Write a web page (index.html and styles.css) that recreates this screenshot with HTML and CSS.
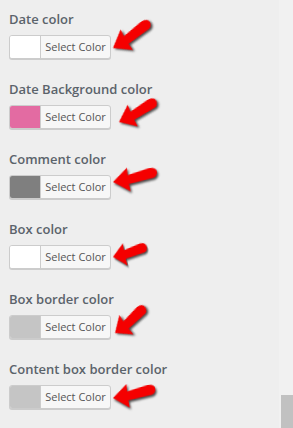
FILE: index.html
```html
<!DOCTYPE html>
<html lang="en">
<head>
  <meta charset="UTF-8" />
  <meta name="viewport" content="width=device-width, initial-scale=1.0" />
  <title>Color settings</title>
  <link rel="stylesheet" href="styles.css">
</head>
<body>
  <svg width="0" height="0" class="defs">
    <defs>
      <path id="arrow-shape" d="M1 13 L17 1 L16.5 8.5 L38 5 Q46 4.5 46 10 Q46 15.5 38 15.5 L16.5 17.5 L17 25 Z" />
    </defs>
  </svg>

  <div class="page">
    <div class="settings">

      <div class="field">
        <div class="label">Date color</div>
        <button class="picker"><span class="swatch swatch-white"></span><span class="picker-text">Select Color</span></button>
        <svg class="arrow arrow-1" viewBox="0 0 46 26"><use href="#arrow-shape" /></svg>
      </div>

      <div class="field">
        <div class="label">Date Background color</div>
        <button class="picker"><span class="swatch swatch-pink"></span><span class="picker-text">Select Color</span></button>
        <svg class="arrow arrow-2" viewBox="0 0 46 26"><use href="#arrow-shape" /></svg>
      </div>

      <div class="field">
        <div class="label">Comment color</div>
        <button class="picker"><span class="swatch swatch-gray"></span><span class="picker-text">Select Color</span></button>
        <svg class="arrow arrow-3" viewBox="0 0 46 26"><use href="#arrow-shape" /></svg>
      </div>

      <div class="field">
        <div class="label">Box color</div>
        <button class="picker"><span class="swatch swatch-white"></span><span class="picker-text">Select Color</span></button>
        <svg class="arrow arrow-4" viewBox="0 0 46 26"><use href="#arrow-shape" /></svg>
      </div>

      <div class="field">
        <div class="label">Box border color</div>
        <button class="picker"><span class="swatch swatch-light"></span><span class="picker-text">Select Color</span></button>
        <svg class="arrow arrow-5" viewBox="0 0 46 26"><use href="#arrow-shape" /></svg>
      </div>

      <div class="field">
        <div class="label">Content box border color</div>
        <button class="picker"><span class="swatch swatch-light"></span><span class="picker-text">Select Color</span></button>
        <svg class="arrow arrow-6" viewBox="0 0 46 26"><use href="#arrow-shape" /></svg>
      </div>

    </div>

    <div class="scrollbar">
      <div class="thumb"></div>
    </div>
  </div>
</body>
</html>
```

FILE: styles.css
```css
html, body {
  height: 100%;
}

body {
  margin: 0;
  background: #eeeeee;
  font-family: 'Open Sans', sans-serif;
  overflow: hidden;
}

.defs {
  position: absolute;
}

.page {
  display: flex;
  height: 428px;
}

.settings {
  flex: 1;
  padding-left: 9px;
}

.field {
  position: relative;
  height: 70px;
  padding-top: 9px;
  box-sizing: border-box;
}

.label {
  font-size: 13px;
  font-weight: 600;
  line-height: 20px;
  color: #5b636b;
  white-space: nowrap;
  margin-bottom: 6px;
}

.picker {
  display: flex;
  width: 102px;
  height: 24px;
  padding: 0;
  border: 1px solid #cccccc;
  border-radius: 3px;
  background: #f7f7f7;
  box-shadow: 0 1px 0 #cccccc;
  overflow: hidden;
  cursor: pointer;
}

.swatch {
  width: 30px;
  height: 100%;
  border-right: 1px solid #cccccc;
}

.swatch-white { background: #ffffff; }
.swatch-pink { background: #e36ba2; }
.swatch-gray { background: #7f7f7f; }
.swatch-light { background: #c5c5c5; }

.picker-text {
  flex: 1;
  font-family: 'Open Sans', sans-serif;
  font-size: 11px;
  line-height: 22px;
  color: #555555;
  text-align: center;
}

.arrow {
  position: absolute;
  width: 46px;
  height: 26px;
  fill: #f50000;
  overflow: visible;
  transform-origin: 1px 13px;
  filter: drop-shadow(1px 2px 1px rgba(0, 0, 0, 0.7));
}

.arrow-1 { left: 103px; top: 35px; transform: rotate(-31deg); }
.arrow-2 { left: 109px; top: 39px; transform: rotate(-25deg) scale(0.95, 1); }
.arrow-3 { left: 103px; top: 29px; transform: rotate(-9deg); }
.arrow-4 { left: 103px; top: 34px; transform: rotate(-12deg) scale(0.78, 0.95); }
.arrow-5 { left: 105px; top: 40px; transform: rotate(-36deg) scale(0.88, 1); }
.arrow-6 { left: 103px; top: 35px; transform: rotate(-8deg) scale(0.96, 1); }

.scrollbar {
  width: 14px;
  background: #f1f1f1;
  display: flex;
  align-items: flex-end;
  justify-content: flex-end;
}

.thumb {
  width: 12px;
  height: 33px;
  background: #c1c1c1;
}
```
